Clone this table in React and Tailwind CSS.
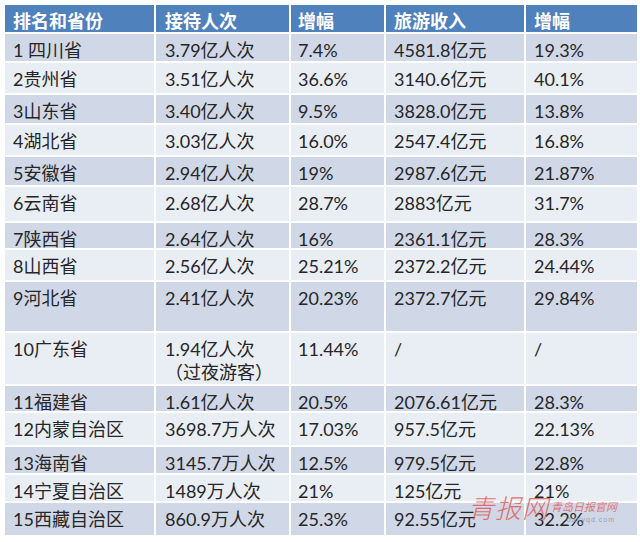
import React from 'react';

const rows = [
  ['1 四川省', '3.79亿人次', '7.4%', '4581.8亿元', '19.3%'],
  ['2贵州省', '3.51亿人次', '36.6%', '3140.6亿元', '40.1%'],
  ['3山东省', '3.40亿人次', '9.5%', '3828.0亿元', '13.8%'],
  ['4湖北省', '3.03亿人次', '16.0%', '2547.4亿元', '16.8%'],
  ['5安徽省', '2.94亿人次', '19%', '2987.6亿元', '21.87%'],
  ['6云南省', '2.68亿人次', '28.7%', '2883亿元', '31.7%'],
  ['7陕西省', '2.64亿人次', '16%', '2361.1亿元', '28.3%'],
  ['8山西省', '2.56亿人次', '25.21%', '2372.2亿元', '24.44%'],
  ['9河北省', '2.41亿人次', '20.23%', '2372.7亿元', '29.84%'],
  ['10广东省', '1.94亿人次\n（过夜游客）', '11.44%', '/', '/'],
  ['11福建省', '1.61亿人次', '20.5%', '2076.61亿元', '28.3%'],
  ['12内蒙自治区', '3698.7万人次', '17.03%', '957.5亿元', '22.13%'],
  ['13海南省', '3145.7万人次', '12.5%', '979.5亿元', '22.8%'],
  ['14宁夏自治区', '1489万人次', '21%', '125亿元', '21%'],
  ['15西藏自治区', '860.9万人次', '25.3%', '92.55亿元', '32.2%'],
];

const headers = ['排名和省份', '接待人次', '增幅', '旅游收入', '增幅'];

const pad = ['pl-2', 'pl-[9px]', 'pl-[7px]', 'pl-2', 'pl-2'];

export default function App() {
  return (
    <div className="w-[640px] h-[542px] bg-white pt-[5px] pl-[5px] font-['Lato','Noto_Sans_CJK_SC',sans-serif]">
      <div className="relative w-[632px]">
        <div className="grid grid-cols-[149px_133px_93px_138px_111px] grid-rows-[27px_27px_30px_28px_30px_28px_34px_25px_30px_49px_51px_25px_32px_26px_26px_32px] gap-[2px]">
          {headers.map((h, i) => (
            <div
              key={'h' + i}
              className={`bg-[#4f81bd] text-white font-bold text-[18px] leading-[22px] pt-[4px] font-['Noto_Sans_CJK_SC',sans-serif] ${pad[i]}`}
            >
              {h}
            </div>
          ))}
          {rows.map((r, ri) =>
            r.map((c, ci) => (
              <div
                key={ri + '-' + ci}
                className={`${ri % 2 === 0 ? 'bg-[#d0d8e8]' : 'bg-[#e9edf4]'} text-[#262626] text-[18px] leading-[23px] pt-[5px] whitespace-pre-line ${pad[ci]}`}
              >
                {c}
              </div>
            ))
          )}
        </div>

        {/* watermark */}
        <div className="absolute left-[463px] top-[486px] flex items-start pointer-events-none">
          <span className="text-[26px] leading-[32px] text-[#e0504c]/80 italic font-light font-['Noto_Sans_CJK_SC',sans-serif] tracking-[1px]">
            青报网
          </span>
          <div className="ml-[2px] mt-[9px] flex flex-col items-end">
            <span className="text-[11px] leading-[12px] text-[#e0504c]/75 italic font-['Noto_Sans_CJK_SC',sans-serif]">
              青岛日报官网
            </span>
            <span className="text-[7px] leading-[9px] text-[#9aa0aa] tracking-[1px] mt-[3px] mr-[2px] font-['Liberation_Sans',sans-serif]">
              dailyqd.com
            </span>
          </div>
        </div>
      </div>
    </div>
  );
}
